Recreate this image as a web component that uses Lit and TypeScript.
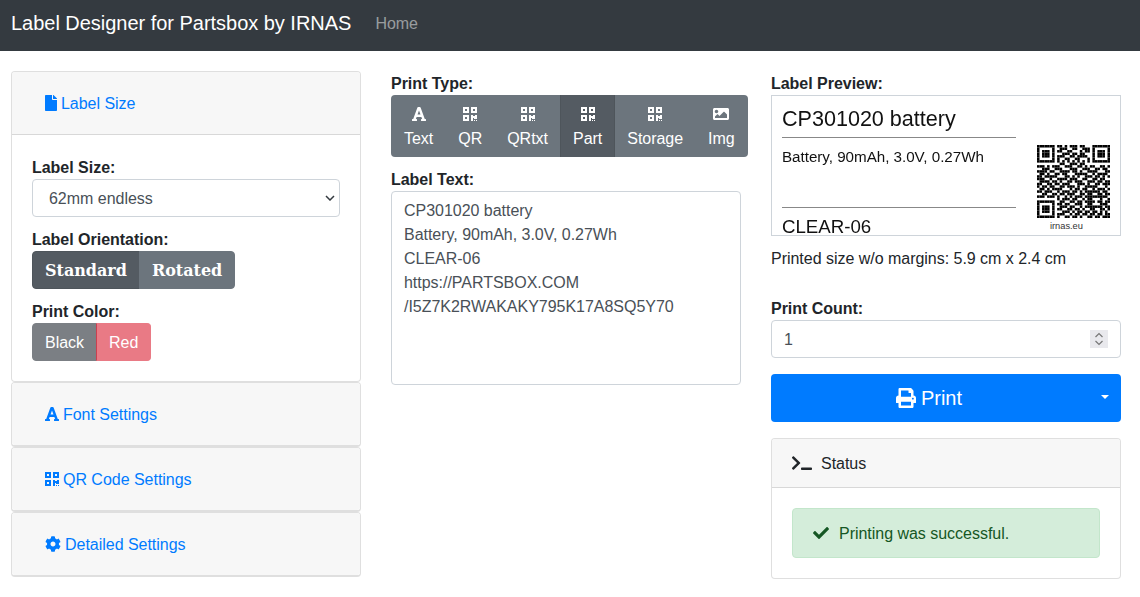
import { LitElement, css, html, svg } from 'lit';
import { customElement } from 'lit/decorators.js';

const qrIcon = html`<svg class="ico" viewBox="0 0 448 512" fill="currentColor"><path d="M0 224h192V32H0v192zM64 96h64v64H64V96zm192-64v192h192V32H256zm128 128h-64V96h64v64zM0 480h192V288H0v192zm64-128h64v64H64v-64zm364-64h20v128h-96v-32h-32v96h-64V288h64v32h64v-32h44zm0 160h20v32h-32v-32h12zm-76 0h32v32h-32v-32z"/></svg>`;
const fontIcon = html`<svg class="ico" viewBox="0 0 448 512" fill="currentColor"><path d="M432 416h-23.41L277.88 53.69A32 32 0 0 0 247.58 32h-47.16a32 32 0 0 0-30.3 21.69L39.41 416H16a16 16 0 0 0-16 16v32a16 16 0 0 0 16 16h128a16 16 0 0 0 16-16v-32a16 16 0 0 0-16-16h-19.6l23.3-64h152.6l23.3 64H304a16 16 0 0 0-16 16v32a16 16 0 0 0 16 16h128a16 16 0 0 0 16-16v-32a16 16 0 0 0-16-16zM176.85 272L224 142.51 271.15 272z"/></svg>`;
const imageIcon = html`<svg class="ico" viewBox="0 0 512 512" fill="currentColor"><path d="M464 448H48c-26.51 0-48-21.49-48-48V112c0-26.51 21.49-48 48-48h416c26.51 0 48 21.49 48 48v288c0 26.51-21.49 48-48 48zM112 120c-30.93 0-56 25.07-56 56s25.07 56 56 56 56-25.07 56-56-25.07-56-56-56zM64 384h384V272l-87.5-87.5c-4.69-4.69-12.29-4.69-16.97 0L208 320l-55.5-55.5c-4.69-4.69-12.29-4.69-16.97 0L64 336v48z"/></svg>`;
const fileIcon = html`<svg class="ico" viewBox="0 0 384 512" fill="currentColor"><path d="M224 136V0H24C10.7 0 0 10.7 0 24v464c0 13.3 10.7 24 24 24h336c13.3 0 24-10.7 24-24V160H248c-13.2 0-24-10.8-24-24zm160-14.1v6.1H256V0h6.1c6.4 0 12.5 2.5 17 7l97.9 98c4.5 4.5 7 10.6 7 16.9z"/></svg>`;
const cogIcon = html`<svg class="ico" viewBox="0 0 512 512" fill="currentColor"><path d="M487.4 315.7l-42.6-24.6c4.3-23.2 4.3-47 0-70.2l42.6-24.6c4.9-2.8 7.1-8.6 5.5-14-11.1-35.6-30-67.8-54.7-94.6-3.8-4.1-10-5.1-14.8-2.3L380.8 110c-17.9-15.4-38.5-27.3-60.8-35.1V25.8c0-5.6-3.9-10.5-9.4-11.7-36.7-8.2-74.3-7.8-109.2 0-5.5 1.2-9.4 6.1-9.4 11.7V75c-22.2 7.9-42.8 19.8-60.8 35.1L88.7 85.5c-4.9-2.8-11-1.9-14.8 2.3-24.7 26.7-43.6 58.9-54.7 94.6-1.7 5.4.6 11.2 5.5 14L67.3 221c-4.3 23.2-4.3 47 0 70.2l-42.6 24.6c-4.9 2.8-7.1 8.6-5.5 14 11.1 35.6 30 67.8 54.7 94.6 3.8 4.1 10 5.1 14.8 2.3l42.6-24.6c17.9 15.4 38.5 27.3 60.8 35.1v49.2c0 5.6 3.9 10.5 9.4 11.7 36.7 8.2 74.3 7.8 109.2 0 5.5-1.2 9.4-6.1 9.4-11.7v-49.2c22.2-7.9 42.8-19.8 60.8-35.1l42.6 24.6c4.9 2.8 11 1.9 14.8-2.3 24.7-26.7 43.6-58.9 54.7-94.6 1.5-5.5-.7-11.3-5.6-14.1zM256 336c-44.1 0-80-35.9-80-80s35.9-80 80-80 80 35.9 80 80-35.9 80-80 80z"/></svg>`;
const printIcon = html`<svg class="ico" viewBox="0 0 512 512" fill="currentColor"><path d="M448 192V77.25c0-8.49-3.37-16.62-9.37-22.63L393.37 9.37c-6-6-14.14-9.37-22.63-9.37H96C78.33 0 64 14.33 64 32v160c-35.35 0-64 28.65-64 64v112c0 8.84 7.16 16 16 16h48v96c0 17.67 14.33 32 32 32h320c17.67 0 32-14.33 32-32v-96h48c8.84 0 16-7.16 16-16V256c0-35.35-28.65-64-64-64zm-64 256H128v-96h256v96zm0-224H128V64h192v48c0 8.84 7.16 16 16 16h48v96zm48 72c-13.25 0-24-10.75-24-24 0-13.26 10.75-24 24-24s24 10.74 24 24c0 13.25-10.75 24-24 24z"/></svg>`;
const termIcon = html`<svg class="ico term" viewBox="0 0 640 512" fill="currentColor"><path d="M257.981 272.971L63.638 467.314c-9.373 9.373-24.569 9.373-33.941 0L7.029 444.647c-9.357-9.357-9.375-24.522-.04-33.901L161.011 256 6.99 101.255c-9.335-9.379-9.317-24.544.04-33.901l22.667-22.667c9.373-9.373 24.569-9.373 33.941 0L257.981 239.03c9.373 9.372 9.373 24.568 0 33.941zM640 456v-32c0-13.255-10.745-24-24-24H312c-13.255 0-24 10.745-24 24v32c0 13.255 10.745 24 24 24h304c13.255 0 24-10.745 24-24z"/></svg>`;
const checkIcon = html`<svg class="ico" viewBox="0 0 512 512" fill="currentColor"><path d="M173.898 439.404l-166.4-166.4c-9.997-9.997-9.997-26.206 0-36.204l36.203-36.204c9.997-9.998 26.207-9.998 36.204 0L192 312.69 432.095 72.596c9.997-9.997 26.207-9.997 36.204 0l36.203 36.204c9.997 9.997 9.997 26.206 0 36.204l-294.4 294.401c-9.998 9.997-26.207 9.997-36.204-.001z"/></svg>`;

// hand copy of the qr modules, 29 x 29, spaces only for reading
const QR_DATA = [
  '1111111 0 1101011101100 0 1111111',
  '1000001 0 0111001100111 0 1000001',
  '1011101 0 1100110001011 0 1011101',
  '1011101 0 0011101101100 0 1011101',
  '1011101 0 1110011011110 0 1011101',
  '1000001 0 1001100110001 0 1000001',
  '1111111 0 1010101010101 0 1111111',
  '0000000 0 0110011101100 0 0000000',
  '1110101 1 1001110011010 1 1001101',
  '0011100 1 1100011100111 0 0110110',
  '1111011 0 0111101101001 1 1100011',
  '0110100 1 1011000111110 0 1011110',
  '1101111 1 0001101010011 1 0110101',
  '1110010 0 1111011100110 0 1101100',
  '0111101 1 0100110111001 1 1011011',
  '1100110 1 1011100011101 0 0110111',
  '1011011 0 0110111010011 1 1100010',
  '0110101 1 1100010110110 0 1011101',
  '1101110 0 1011101101011 1 1110110',
  '0011001 1 0110111001101 1 0011011',
  '1110111 0 1001010111011 1 1111110',
  '0000000 0 1011101100101 1 0001001',
  '1111111 0 0110011011011 1 1011011',
  '1000001 0 1101100111001 1 0001110',
  '1011101 0 0111011001011 1 1111011',
  '1011101 0 1100110110100 1 1001101',
  '1011101 0 0011101011011 0 1101010',
  '1000001 0 1110010110110 1 1011011',
  '1111111 0 1001101101001 1 0110111',
].map((row) => row.replace(/ /g, ''));

const qrCode = html`<svg class="qr" viewBox="0 0 29 29">
  ${QR_DATA.flatMap((row, y) =>
    [...row].map((c, x) => (c === '1' ? svg`<rect x=${x} y=${y} width="1" height="1"></rect>` : null)),
  )}
</svg>`;

@customElement('app-root')
class AppRoot extends LitElement {
  static styles = css`
    :host {
      display: block;
      font-family: Arial, 'Liberation Sans', sans-serif;
      font-size: 16px;
      line-height: 24px;
      letter-spacing: -0.025px;
      color: #212529;
      background: #fff;
      min-height: 597px;
      overflow: hidden;
    }
    * {
      box-sizing: border-box;
    }
    .ico {
      display: inline-block;
      height: 16px;
      width: auto;
      vertical-align: -2px;
    }
    /* text sits 1px lower than its centred box in the flex rows */
    .t {
      padding-top: 2px;
    }
    .navbar {
      display: flex;
      align-items: center;
      height: 51px;
      background: #343a40;
      padding: 0 11px 4px;
    }
    .brand {
      color: #fff;
      font-size: 20px;
      margin: 0 24px 2px 0;
    }
    .home {
      color: rgba(255, 255, 255, 0.5);
    }
    .main {
      display: grid;
      grid-template-columns: 350px 350px 350px;
      column-gap: 30px;
      padding: 20px 0 0 11px;
    }
    label {
      display: block;
      font-weight: 700;
      height: 24px;
      padding-top: 1px;
      line-height: 24px;
    }
    .card {
      border: 1px solid rgba(0, 0, 0, 0.125);
      border-radius: 4px;
      background: #fff;
    }
    .acc-head {
      display: flex;
      align-items: center;
      height: 62px;
      padding-left: 33px;
      background: #f7f7f7;
      color: #007bff;
      border-radius: 3px;
    }
    .acc-head .ico {
      margin-right: 4px;
    }
    .acc-head.first {
      height: 63px;
      border-bottom: 1px solid rgba(0, 0, 0, 0.125);
      border-radius: 3px 3px 0 0;
    }
    .acc-card.closed {
      border-bottom-width: 2px;
    }
    .acc-body {
      padding: 20px;
      height: 246px;
    }
    .select {
      display: flex;
      align-items: center;
      justify-content: space-between;
      height: 38px;
      border: 1px solid #ced4da;
      border-radius: 4px;
      padding: 0 4px 0 16px;
      color: #495057;
      margin-bottom: 10px;
    }
    .select svg {
      width: 10px;
      height: 6px;
    }
    .btn-group {
      display: flex;
      width: max-content;
      margin-bottom: 10px;
    }
    .btn-group .btn {
      height: 38px;
      display: flex;
      align-items: center;
      padding: 2px 12px 0;
      color: #fff;
      background: #6c757d;
      border: 1px solid #6c757d;
    }
    .btn-group .btn:first-child {
      border-radius: 4px 0 0 4px;
    }
    .btn-group .btn:last-child {
      border-radius: 0 4px 4px 0;
      margin-left: -1px;
    }
    .serif .btn {
      font-family: 'DejaVu Serif', serif;
      font-weight: 700;
      font-size: 16px;
    }
    .btn-group .on {
      background: #545b62;
      border-color: #4e555b;
    }
    .btn-group .black {
      background: #7b7f84;
      border-color: #7b7f84;
    }
    .btn-group .red {
      background: #e97a85;
      border-color: #e97a85;
      border-left-color: #c94050;
    }
    .types {
      display: flex;
      width: max-content;
      height: 62px;
      background: #6c757d;
      border-radius: 4px;
      color: #fff;
      margin-bottom: 10px;
    }
    .type {
      padding: 7px 13px;
      line-height: 24px;
      text-align: center;
    }
    .type + .type {
      margin-left: -1px;
    }
    .type .ico {
      display: block;
      margin: 4px auto 5px;
    }
    .type.on {
      background: #545b62;
      box-shadow: inset 1px 0 0 #4e555b, inset -1px 0 0 #4e555b;
    }
    .textarea {
      height: 194px;
      border: 1px solid #ced4da;
      border-radius: 4px;
      padding: 7px 12px;
      color: #495057;
      white-space: pre;
    }
    .preview {
      display: flex;
      height: 141px;
      border: 1px solid #ced4da;
      overflow: hidden;
      color: #111;
      padding-left: 10px;
    }
    .pv-text {
      width: 234px;
      flex: none;
      filter: blur(0.2px);
    }
    .pv-title {
      font-size: 21.6px;
      line-height: 26px;
      margin-top: 10px;
      padding-bottom: 5px;
      border-bottom: 1px solid #888;
    }
    .pv-desc {
      font-size: 15.2px;
      line-height: 18px;
      height: 70px;
      padding-top: 10px;
      border-bottom: 1px solid #888;
    }
    .pv-loc {
      font-size: 18.7px;
      line-height: 16px;
      margin-top: 11px;
    }
    .pv-qr {
      margin: 49px 0 0 21px;
      width: 73px;
    }
    .qr {
      display: block;
      width: 73px;
      height: 73px;
      filter: blur(0.3px);
    }
    .pv-url {
      display: block;
      font-size: 9.3px;
      line-height: 12px;
      margin: 2px 0 0 13px;
      color: #333;
    }
    .printed {
      margin: 11px 0 25px;
      line-height: 24px;
    }
    .number {
      display: flex;
      align-items: center;
      justify-content: space-between;
      height: 38px;
      border: 1px solid #ced4da;
      border-radius: 4px;
      padding: 0 12px;
      color: #495057;
      margin-bottom: 16px;
    }
    .spin {
      display: block;
      width: 18px;
      height: 18px;
      background: #e9e9ed;
    }
    .print {
      position: relative;
      display: flex;
      align-items: center;
      justify-content: center;
      height: 48px;
      padding-right: 34px;
      background: #007bff;
      color: #fff;
      font-size: 20px;
      border-radius: 4px;
      margin-bottom: 16px;
    }
    .print .ico {
      height: 20px;
      margin-right: 5px;
    }
    .caret {
      position: absolute;
      right: 12px;
      top: 21px;
      border-top: 4.8px solid #fff;
      border-left: 4.8px solid transparent;
      border-right: 4.8px solid transparent;
    }
    .status-head {
      display: flex;
      align-items: center;
      height: 49px;
      padding-left: 20px;
      background: #f7f7f7;
      border-bottom: 1px solid rgba(0, 0, 0, 0.125);
      border-radius: 3px 3px 0 0;
    }
    .term {
      height: 16px;
      margin-right: 9px;
    }
    .status-body {
      padding: 20px;
    }
    .alert {
      display: flex;
      align-items: center;
      height: 50px;
      padding-left: 20px;
      background: #d4edda;
      border: 1px solid #c3e6cb;
      border-radius: 4px;
      color: #155724;
    }
    .alert .ico {
      margin-right: 10px;
    }
  `;

  render() {
    return html`
      <nav class="navbar">
        <span class="brand">Label Designer for Partsbox by IRNAS</span>
        <span class="home">Home</span>
      </nav>
      <div class="main">
        <div class="col-left">
          <div class="card acc-card">
            <div class="acc-head first">${fileIcon}<span class="t">Label Size</span></div>
            <div class="acc-body">
              <label>Label Size:</label>
              <div class="select">
                <span class="t">62mm endless</span>
                <svg viewBox="0 0 10 6" fill="none" stroke="#343a40" stroke-width="1.5"><path d="M1 1l4 4 4-4" /></svg>
              </div>
              <label>Label Orientation:</label>
              <div class="btn-group serif">
                <div class="btn on">Standard</div>
                <div class="btn">Rotated</div>
              </div>
              <label>Print Color:</label>
              <div class="btn-group">
                <div class="btn black">Black</div>
                <div class="btn red">Red</div>
              </div>
            </div>
          </div>
          <div class="card acc-card closed"><div class="acc-head">${fontIcon}<span class="t">Font Settings</span></div></div>
          <div class="card acc-card closed"><div class="acc-head">${qrIcon}<span class="t">QR Code Settings</span></div></div>
          <div class="card acc-card closed"><div class="acc-head">${cogIcon}<span class="t">Detailed Settings</span></div></div>
        </div>

        <div class="col-mid">
          <label>Print Type:</label>
          <div class="types">
            <div class="type">${fontIcon}Text</div>
            <div class="type">${qrIcon}QR</div>
            <div class="type">${qrIcon}QRtxt</div>
            <div class="type on">${qrIcon}Part</div>
            <div class="type">${qrIcon}Storage</div>
            <div class="type">${imageIcon}Img</div>
          </div>
          <label>Label Text:</label>
          <div class="textarea">CP301020 battery
Battery, 90mAh, 3.0V, 0.27Wh
CLEAR-06
https://PARTSBOX.COM
/I5Z7K2RWAKAKY795K17A8SQ5Y70</div>
        </div>

        <div class="col-right">
          <label>Label Preview:</label>
          <div class="preview">
            <div class="pv-text">
              <div class="pv-title">CP301020 battery</div>
              <div class="pv-desc">Battery, 90mAh, 3.0V, 0.27Wh</div>
              <div class="pv-loc">CLEAR-06</div>
            </div>
            <div class="pv-qr">${qrCode}<span class="pv-url">irnas.eu</span></div>
          </div>
          <div class="printed">Printed size w/o margins: 5.9 cm x 2.4 cm</div>
          <label>Print Count:</label>
          <div class="number">
            <span class="t">1</span>
            <svg class="spin" viewBox="0 0 18 18" fill="none" stroke="#777" stroke-width="1.2"><path d="M5.5 7L9 3.5 12.5 7M5.5 11L9 14.5 12.5 11" /></svg>
          </div>
          <div class="print">${printIcon}<span>Print</span><span class="caret"></span></div>
          <div class="card">
            <div class="status-head">${termIcon}<span class="t">Status</span></div>
            <div class="status-body">
              <div class="alert">${checkIcon}<span class="t">Printing was successful.</span></div>
            </div>
          </div>
        </div>
      </div>
    `;
  }
}
